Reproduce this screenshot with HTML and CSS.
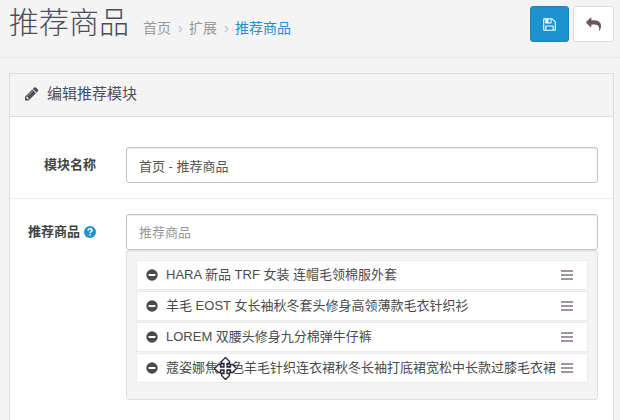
FILE: index.html
```html
<!DOCTYPE html>
<html lang="zh-CN">
<head>
    <meta charset="UTF-8">
    <meta name="viewport" content="width=device-width, initial-scale=1.0">
    <title>推荐商品</title>
    <link rel="stylesheet" href="styles.css">
</head>
<body>
    <!-- Shared icons -->
    <svg class="sprite" aria-hidden="true">
        <symbol id="icon-minus" viewBox="0 0 12 12">
            <circle cx="6" cy="6" r="5.7" fill="currentColor"/>
            <rect x="2.6" y="5" width="6.8" height="2" rx="0.4" fill="#fff"/>
        </symbol>
        <symbol id="icon-bars" viewBox="0 0 12 12">
            <path d="M0 1h12v2H0zM0 5h12v2H0zM0 9h12v2H0z" fill="currentColor"/>
        </symbol>
    </svg>

    <header class="page-header">
        <h1>推荐商品</h1>
        <nav class="breadcrumb">
            <a href="#">首页</a>
            <a href="#">扩展</a>
            <a href="#" class="current">推荐商品</a>
        </nav>
        <div class="actions">
            <button type="submit" form="form-module" class="btn btn-primary" aria-label="保存">
                <svg width="13" height="13" viewBox="100 100 1592 1592"><path fill="currentColor" d="M512 1536h768v-384h-768v384zm896 0h128v-896q0-14-10-38.500t-20-34.500l-281-281q-10-10-34-20t-39-10v416q0 40-28 68t-68 28h-576q-40 0-68-28t-28-68v-416h-128v1280h128v-416q0-40 28-68t68-28h832q40 0 68 28t28 68v416zm-384-928v-320q0-13-9.500-22.500t-22.500-9.500h-192q-13 0-22.500 9.500t-9.500 22.500v320q0 13 9.500 22.500t22.500 9.500h192q13 0 22.500-9.500t9.500-22.500zm640 32v928q0 40-28 68t-68 28h-1344q-40 0-68-28t-28-68v-1344q0-40 28-68t68-28h928q40 0 88 20t76 48l280 280q28 28 48 76t20 88z"/></svg>
            </button>
            <button type="button" class="btn btn-default" aria-label="返回">
                <svg width="15" height="15" viewBox="0 0 1792 1792"><path fill="currentColor" d="M1792 1120q0 166-127 451-3 7-10.500 24t-13.500 30-13 22q-12 17-28 17-15 0-23.500-10t-8.500-25q0-9 2.500-26.500t2.500-23.500q5-68 5-123 0-101-17.500-181t-48.500-138.500-80-101-105.500-69.500-133-42.500-154-21.500-175.500-6h-224v256q0 26-19 45t-45 19-45-19l-512-512q-19-19-19-45t19-45l512-512q19-19 45-19t45 19 19 45v256h224q713 0 875 403 53 134 53 333z"/></svg>
            </button>
        </div>
    </header>

    <main class="panel">
        <div class="panel-heading">
            <svg width="14" height="14" viewBox="128 128 1600 1600"><path fill="currentColor" d="M491 1536l91-91-235-235-91 91v107h128v128h107zm523-928q0-22-22-22-10 0-17 7l-542 542q-7 7-7 17 0 22 22 22 10 0 17-7l542-542q7-7 7-17zm-54-192l416 416-832 832h-416v-416zm683 96q0 53-37 90l-166 166-416-416 166-165q36-38 90-38 53 0 91 38l235 234q37 39 37 91z"/></svg>
            <h2>编辑推荐模块</h2>
        </div>
        <form class="panel-body" id="form-module">
            <div class="form-group">
                <label for="input-name">模块名称</label>
                <div class="field">
                    <input type="text" id="input-name" class="form-control" value="首页 - 推荐商品">
                </div>
            </div>
            <div class="form-group">
                <label for="input-product">推荐商品
                    <svg class="help" width="12" height="12" viewBox="0 0 12 12"><circle cx="6" cy="6" r="6" fill="currentColor"/><path d="M4 4.600C4.100 3.200 5 2.700 6 2.700c1.200 0 2 .7 2 1.700 0 1.400-1.900 1.300-1.900 2.700" fill="none" stroke="#fff" stroke-width="1.500"/><path d="M5.300 8h1.600v1.500H5.300z" fill="#fff"/></svg>
                </label>
                <div class="field">
                    <input type="text" id="input-product" class="form-control" placeholder="推荐商品">
                    <ul class="well">
                        <li>
                            <svg class="remove" width="12" height="12"><use href="#icon-minus"/></svg>
                            <span>HARA 新品 TRF 女装 连帽毛领棉服外套</span>
                            <svg class="handle" width="12" height="12"><use href="#icon-bars"/></svg>
                        </li>
                        <li>
                            <svg class="remove" width="12" height="12"><use href="#icon-minus"/></svg>
                            <span>羊毛 EOST 女长袖秋冬套头修身高领薄款毛衣针织衫</span>
                            <svg class="handle" width="12" height="12"><use href="#icon-bars"/></svg>
                        </li>
                        <li>
                            <svg class="remove" width="12" height="12"><use href="#icon-minus"/></svg>
                            <span>LOREM 双腰头修身九分棉弹牛仔裤</span>
                            <svg class="handle" width="12" height="12"><use href="#icon-bars"/></svg>
                        </li>
                        <li>
                            <svg class="remove" width="12" height="12"><use href="#icon-minus"/></svg>
                            <span>蔻姿娜焦糖色羊毛针织连衣裙秋冬长袖打底裙宽松中长款过膝毛衣裙</span>
                            <svg class="handle" width="12" height="12"><use href="#icon-bars"/></svg>
                            <!-- Move cursor -->
                            <svg class="cursor" width="23" height="23" viewBox="0 0 23 23"><path d="M11.500 .5l4 4v2h-2.500v3.500h3.500v-2.500h2l4 4-4 4h-2v-2.500h-3.500v3.500h2.500v2l-4 4-4-4v-2h2.500v-3.500h-3.500v2.500h-2l-4-4 4-4h2v2.500h3.500v-3.500h-2.500v-2z" fill="#fff" stroke="#23233a" stroke-width="1.300"/></svg>
                        </li>
                    </ul>
                </div>
            </div>
        </form>
    </main>
</body>
</html>
```
FILE: styles.css
```css
* {
    box-sizing: border-box;
}
body {
    margin: 0;
    min-height: 100vh;
    display: flex;
    flex-direction: column;
    background: #f4f4f4;
    color: #4c4d5a;
    font-family: "Liberation Sans", "Noto Sans CJK SC", sans-serif;
    font-size: 13px;
    line-height: 20px;
}
svg {
    display: block;
    flex: none;
}
.sprite {
    position: absolute;
    width: 0;
    height: 0;
}

/* Page header */
.page-header {
    display: flex;
    align-items: baseline;
    gap: 14px;
    padding: 6px 6px 15px 9px;
    border-bottom: 1px solid #e7e7e7;
}
.page-header h1 {
    margin: 0;
    font-family: "Noto Sans CJK SC Light", "Noto Sans CJK SC", sans-serif;
    font-size: 30px;
    font-weight: 300;
    line-height: 28px;
}
.breadcrumb {
    display: flex;
    font-size: 14px;
}
.breadcrumb a {
    color: #999;
    text-decoration: none;
}
.breadcrumb a + a::before {
    content: "›";
    display: inline-block;
    width: 11px;
    padding-left: 7px;
    color: #bbb;
}
.breadcrumb .current {
    color: #1e91cf;
}
.actions {
    display: flex;
    align-self: flex-start;
    gap: 4px;
    margin-left: auto;
}
.btn {
    display: flex;
    align-items: center;
    height: 36px;
    padding: 0 12px;
    border: 1px solid #ddd;
    border-radius: 3px;
    cursor: pointer;
}
.btn-primary {
    background: #1e91cf;
    border-color: #1b85be;
    color: #fff;
}
.btn-default {
    background: #fff;
    color: #6b5560;
}

/* Panel */
.panel {
    flex: 1;
    margin: 15px 6px 0 9px;
    background: #fff;
    border: 1px solid #dcdcdc;
    border-bottom: 0;
}
.panel-heading {
    display: flex;
    align-items: center;
    gap: 8px;
    padding: 10px 15px 12px;
    background: #f4f4f4;
    border-bottom: 1px solid #dcdcdc;
}
.panel-heading h2 {
    margin: 0;
    font-size: 15px;
    font-weight: 400;
    line-height: 20px;
}
.panel-body {
    padding-top: 15px;
}
.form-group {
    display: flex;
    gap: 30px;
    padding: 15px;
}
.form-group + .form-group {
    border-top: 1px solid #ededed;
}
.form-group label {
    display: flex;
    align-items: center;
    justify-content: flex-end;
    gap: 4px;
    flex: 0 0 71px;
    height: 36px;
    color: #444;
    font-weight: 700;
    white-space: nowrap;
}
.help {
    color: #1e91cf;
}
.field {
    flex: 1;
    min-width: 0;
}
.form-control {
    display: block;
    width: 100%;
    height: 36px;
    padding: 8px 12px;
    border: 1px solid #c4c4c4;
    border-radius: 3px;
    background: #fff;
    box-shadow: inset 0 1px 1px rgba(0, 0, 0, 0.075);
    color: #555;
    font: inherit;
}
.form-control::placeholder {
    color: #999;
    opacity: 1;
}

/* Chosen products */
.well {
    display: flex;
    flex-direction: column;
    gap: 1px;
    height: 150px;
    margin: 0;
    padding: 9px;
    list-style: none;
    background: #f4f4f4;
    border: 1px solid #e0e0e0;
    border-radius: 3px;
    box-shadow: inset 0 1px 1px rgba(0, 0, 0, 0.05);
}
.well li {
    position: relative;
    display: flex;
    align-items: center;
    gap: 8px;
    height: 30px;
    padding: 0 14px 0 9px;
    background: #fff;
    border: 1px solid #ebebeb;
    color: #4a4a4a;
}
.well span {
    flex: 1;
    min-width: 0;
    white-space: nowrap;
}
.remove {
    color: #4a4a4a;
}
.handle {
    color: #a294a2;
}
.cursor {
    position: absolute;
    left: 77px;
    top: 3px;
}
```
